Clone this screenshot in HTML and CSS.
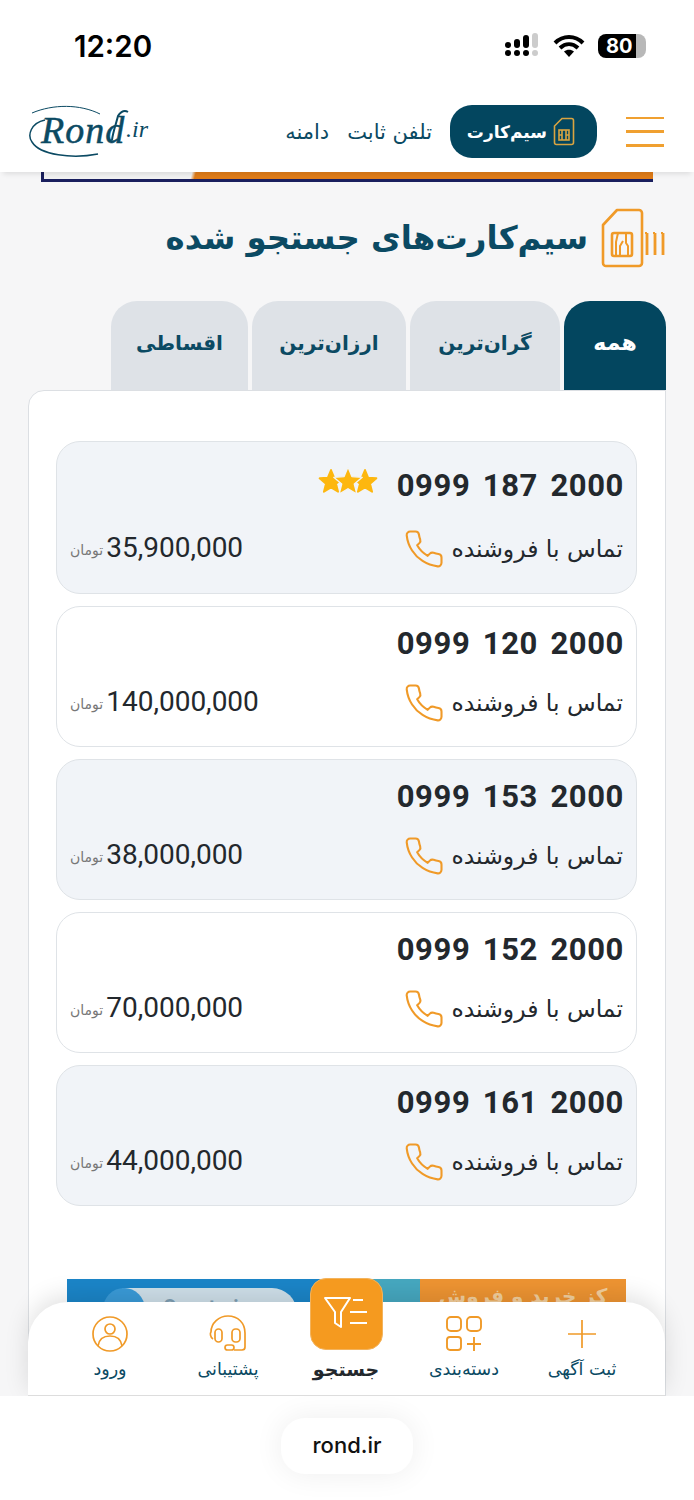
FILE: index.html
```html
<!DOCTYPE html>
<html lang="fa" dir="rtl">
<head>
    <meta charset="UTF-8">
    <meta name="viewport" content="width=device-width, initial-scale=1.0">
    <title>rond.ir</title>
    <link rel="stylesheet" href="styles.css">
</head>
<body>
    <svg class="defs" width="0" height="0">
        <symbol id="phone" viewBox="0 0 24 24">
            <path d="M22 16.92v3a2 2 0 0 1-2.18 2 19.79 19.79 0 0 1-8.63-3.07 19.5 19.5 0 0 1-6-6 19.79 19.79 0 0 1-3.07-8.67A2 2 0 0 1 4.11 2h3a2 2 0 0 1 2 1.72 12.84 12.84 0 0 0 .7 2.81 2 2 0 0 1-.45 2.11L8.09 9.91a16 16 0 0 0 6 6l1.27-1.27a2 2 0 0 1 2.11-.45 12.84 12.84 0 0 0 2.81.7A2 2 0 0 1 22 16.92z" fill="none" stroke="#f09a28" stroke-width="1.2" stroke-linejoin="round"/>
        </symbol>
    </svg>

    <div class="status-bar" dir="ltr">
        <span class="clock">12:20</span>
        <div class="status-icons">
            <svg width="36" height="26" viewBox="0 0 36 26" fill="#000">
                <circle cx="4" cy="20" r="3"/><circle cx="13" cy="20" r="3"/><circle cx="22" cy="20" r="3"/><circle cx="31" cy="20" r="3" fill="#ccc"/>
                <circle cx="4" cy="12" r="3"/><rect x="10" y="6" width="6" height="9" rx="3"/><rect x="19" y="2" width="6" height="13" rx="3"/><rect x="28" y="0" width="6" height="15" rx="3" fill="#ccc"/>
            </svg>
            <svg width="32" height="24" viewBox="0 0 32 24">
                <path d="M2 9C10 1 22 1 30 9M7 14c5.500-5 12.500-5 18 0" fill="none" stroke="#000" stroke-width="4"/>
                <path d="M11 17.500c3-2.500 7-2.500 10 0L16 23z" fill="#000"/>
            </svg>
            <div class="battery"><span>80</span></div>
        </div>
    </div>

    <header class="site-header">
        <button class="menu-btn" aria-label="menu"><i></i><i></i><i></i></button>
        <nav class="top-nav">
            <a class="sim-btn" href="#">
                <svg width="22" height="29" viewBox="0 0 22 29" fill="none" stroke="#d9a441" stroke-width="1.600">
                    <path d="M9 1.500h9.500a2 2 0 0 1 2 2v22a2 2 0 0 1-2 2h-15a2 2 0 0 1-2-2V9z"/>
                    <rect x="6" y="13" width="10" height="10"/>
                    <path d="M9 13v10M13 13v10M6 18h3M13 18h3"/>
                </svg>
                سیم‌کارت
            </a>
            <a href="#">تلفن ثابت</a>
            <a href="#">دامنه</a>
        </nav>
        <svg class="logo" width="124" height="56" viewBox="0 0 124 56">
            <path d="M4 9C25 0 52 0 72 10" fill="none" stroke="#0b4a63" stroke-width="1"/>
            <path d="M17 16C3 19-1 31 4 38c8 13 40 17 66 12" fill="none" stroke="#0b4a63" stroke-width="1.500"/>
            <path d="M100 8c-5-3-9 2-10 4-2 8-5 16-6 24" fill="none" stroke="#0b4a63" stroke-width="2"/>
            <text class="logo-rond" x="13" y="39">Rond</text>
            <text class="logo-ir" x="98" y="33">.ir</text>
        </svg>
    </header>

    <div class="viewport">
        <div class="banner"><div class="banner-fill"></div></div>

        <div class="title-row">
            <svg width="65" height="60" viewBox="0 0 65 60" fill="none" stroke="#f09a28" stroke-width="2.600" stroke-linejoin="round">
                <path d="M16 2h22a3 3 0 0 1 3 3v50a3 3 0 0 1-3 3H5a3 3 0 0 1-3-3V17z"/>
                <rect x="11" y="25" width="20" height="23" rx="2"/>
                <path d="M17 25l-2 9v14M25 25v10l2 3v10M19 48V38l3-5" stroke-width="2"/>
                <path d="M46 25v22M54 25v22M62 25v22" stroke-width="2.800"/>
                <path d="M46 25h-2M54 25h-2M62 25h-2" stroke-width="2"/>
            </svg>
            <h1>سیم‌کارت‌های جستجو شده</h1>
        </div>

        <div class="tabs">
            <a class="tab tab-all active" href="#">همه</a>
            <a class="tab tab-high" href="#">گران‌ترین</a>
            <a class="tab tab-low" href="#">ارزان‌ترین</a>
            <a class="tab tab-inst" href="#">اقساطی</a>
        </div>

        <main class="panel">
            <article class="card shaded first">
                <div class="card-top">
                    <div class="number" dir="ltr"><span>0999</span><span>187</span><span>2000</span></div>
                    <div class="stars">
                        <svg width="60" height="30" viewBox="0 0 60 30" fill="#fdb70f" stroke="#fdb70f" stroke-linejoin="round">
                            <polygon transform="translate(13 16) scale(12)" stroke-width=".16" points="0,-1 .26,-.36 .95,-.31 .42,.14 .59,.81 0,.45 -.59,.81 -.42,.14 -.95,-.31 -.26,-.36"/>
                            <polygon transform="translate(47 16) scale(12)" stroke-width=".16" points="0,-1 .26,-.36 .95,-.31 .42,.14 .59,.81 0,.45 -.59,.81 -.42,.14 -.95,-.31 -.26,-.36"/>
                            <polygon transform="translate(30 16) scale(15)" stroke="#f1f4f8" stroke-width=".09" points="0,-1 .26,-.36 .95,-.31 .42,.14 .59,.81 0,.45 -.59,.81 -.42,.14 -.95,-.31 -.26,-.36"/>
                        </svg>
                    </div>
                </div>
                <div class="card-bottom">
                    <a class="call" href="#">تماس با فروشنده <svg width="42" height="42"><use href="#phone"/></svg></a>
                    <div class="price"><b>35,900,000</b><small>تومان</small></div>
                </div>
            </article>

            <article class="card">
                <div class="card-top">
                    <div class="number" dir="ltr"><span>0999</span><span>120</span><span>2000</span></div>
                </div>
                <div class="card-bottom">
                    <a class="call" href="#">تماس با فروشنده <svg width="42" height="42"><use href="#phone"/></svg></a>
                    <div class="price"><b>140,000,000</b><small>تومان</small></div>
                </div>
            </article>

            <article class="card shaded">
                <div class="card-top">
                    <div class="number" dir="ltr"><span>0999</span><span>153</span><span>2000</span></div>
                </div>
                <div class="card-bottom">
                    <a class="call" href="#">تماس با فروشنده <svg width="42" height="42"><use href="#phone"/></svg></a>
                    <div class="price"><b>38,000,000</b><small>تومان</small></div>
                </div>
            </article>

            <article class="card">
                <div class="card-top">
                    <div class="number" dir="ltr"><span>0999</span><span>152</span><span>2000</span></div>
                </div>
                <div class="card-bottom">
                    <a class="call" href="#">تماس با فروشنده <svg width="42" height="42"><use href="#phone"/></svg></a>
                    <div class="price"><b>70,000,000</b><small>تومان</small></div>
                </div>
            </article>

            <article class="card shaded">
                <div class="card-top">
                    <div class="number" dir="ltr"><span>0999</span><span>161</span><span>2000</span></div>
                </div>
                <div class="card-bottom">
                    <a class="call" href="#">تماس با فروشنده <svg width="42" height="42"><use href="#phone"/></svg></a>
                    <div class="price"><b>44,000,000</b><small>تومان</small></div>
                </div>
            </article>

            <div class="ads">
                <div class="ad ad-orange"><span>کز خرید و فروش</span></div>
                <div class="ad ad-teal"></div>
                <div class="ad ad-blue">
                    <div class="tg-pill" dir="ltr"><i class="tg-circle"></i><span>Constrain</span></div>
                </div>
            </div>
        </main>

        <nav class="bottom-nav">
            <a class="nav-item" href="#">
                <svg width="38" height="38" viewBox="0 0 38 38" fill="none" stroke="#f09a28" stroke-width="1.700">
                    <path d="M19 5v28M5 19h28"/>
                </svg>
                ثبت آگهی
            </a>
            <a class="nav-item" href="#">
                <svg width="38" height="38" viewBox="0 0 38 38" fill="none" stroke="#f09a28" stroke-width="1.900">
                    <rect x="2" y="2" width="14" height="14" rx="4"/><rect x="22" y="2" width="14" height="14" rx="4"/>
                    <rect x="2" y="22" width="14" height="13" rx="3"/><path d="M29 22v14M22 29h14"/>
                </svg>
                دسته‌بندی
            </a>
            <a class="nav-item search" href="#">
                <span class="search-box">
                    <svg width="46" height="40" viewBox="0 0 46 40" fill="none" stroke="#fff" stroke-width="2" stroke-linejoin="round">
                        <path d="M2 4h25l-9 14v15l-6-4V18z"/>
                        <path d="M30 6h10M27 18h17M27 29h17"/>
                    </svg>
                </span>
                جستجو
            </a>
            <a class="nav-item" href="#">
                <svg width="38" height="38" viewBox="0 0 38 38" fill="none" stroke="#f09a28" stroke-width="1.700">
                    <path d="M4 24C1 22 1 18 2 17 2 8 10 1 19 1c10 0 17 7 17 17v14q0 3-3 3h-8"/>
                    <rect x="6" y="14" width="7" height="13" rx="3.500"/><rect x="23" y="14" width="8" height="13" rx="3.500"/>
                    <rect x="16" y="30" width="9" height="5" rx="2.500"/>
                </svg>
                پشتیبانی
            </a>
            <a class="nav-item" href="#">
                <svg width="38" height="38" viewBox="0 0 38 38" fill="none" stroke="#f09a28" stroke-width="1.700">
                    <circle cx="19" cy="19" r="17"/><circle cx="19" cy="14" r="5"/>
                    <path d="M7 31c1-7 6-10 12-10s11 3 12 10"/>
                </svg>
                ورود
            </a>
        </nav>
    </div>

    <footer class="url-bar"><span>rond.ir</span></footer>
</body>
</html>
```

FILE: styles.css
```css
* {
    box-sizing: border-box;
}

body {
    font-family: "DejaVu Sans", sans-serif;
    margin: 0;
    width: 694px;
    height: 1500px;
    overflow: hidden;
    display: flex;
    flex-direction: column;
    background-color: #fff;
    color: #23282d;
}

a {
    color: inherit;
    text-decoration: none;
}

.defs {
    position: absolute;
}

.status-bar {
    height: 95px;
    flex: none;
    display: flex;
    justify-content: space-between;
    align-items: flex-start;
    padding: 28px 48px 0 74px;
}

.clock {
    font-family: Inter, sans-serif;
    font-size: 29.5px;
    font-weight: 600;
    line-height: 36px;
    color: #000;
}

.status-icons {
    display: flex;
    align-items: center;
    gap: 13px;
    height: 36px;
}

.battery {
    width: 48px;
    height: 24px;
    border-radius: 8px;
    background: linear-gradient(to right, #000 38px, #b8b8b8 38px);
    color: #fff;
    font-family: Inter, sans-serif;
    font-size: 20px;
    font-weight: 700;
    line-height: 24px;
    padding-left: 8px;
}

.site-header {
    height: 77px;
    flex: none;
    display: flex;
    align-items: center;
    padding: 0 30px 4px 28px;
    background-color: #fff;
    box-shadow: 0 5px 5px -3px rgba(0, 0, 0, 0.1);
    position: relative;
    z-index: 2;
}

.menu-btn {
    width: 38px;
    height: 30px;
    padding: 0;
    border: none;
    background: none;
    display: flex;
    flex-direction: column;
    justify-content: space-between;
}

.menu-btn i {
    display: block;
    width: 100%;
    height: 2.500px;
    background-color: #f0a030;
}

.top-nav {
    display: flex;
    align-items: center;
    gap: 18px;
    margin-right: 29px;
    color: #0b4a63;
    font-size: 21px;
}

.sim-btn {
    display: flex;
    align-items: center;
    gap: 6px;
    width: 147px;
    height: 53px;
    padding-right: 22px;
    border-radius: 22px;
    background-color: #03465f;
    color: #fff;
    font-size: 17px;
    font-weight: 700;
}

.logo {
    margin-right: auto;
    direction: ltr;
}

.logo-rond {
    font-family: "Liberation Serif", serif;
    font-style: italic;
    font-size: 38px;
    letter-spacing: 1px;
    fill: #0b4a63;
    stroke: #0b4a63;
    stroke-width: 0.5px;
}

.logo-ir {
    font-family: "Liberation Serif", serif;
    font-style: italic;
    font-size: 24px;
    fill: #0b4a63;
}

.viewport {
    flex: none;
    height: 1224px;
    position: relative;
    overflow: hidden;
    background-color: #f6f6f7;
}

.banner {
    height: 10px;
    margin: 0 41px;
    background-color: #1a1f5e;
    padding: 0 0 3px 3px;
}

.banner-fill {
    height: 7px;
    background: linear-gradient(105deg, #f2f2f2 0, #f2f2f2 143px, #e07c18 147px);
}

.title-row {
    display: flex;
    align-items: center;
    gap: 13px;
    height: 60px;
    margin-top: 26px;
    padding-right: 28px;
}

h1 {
    margin: 0;
    font-size: 32.4px;
    font-weight: 700;
    color: #0b4a63;
}

.tabs {
    display: flex;
    gap: 4px;
    height: 89px;
    margin-top: 33px;
    padding-right: 28px;
}

.tab {
    height: 89px;
    border-radius: 26px 26px 0 0;
    background-color: #dee2e7;
    color: #0b4a63;
    font-size: 20px;
    font-weight: 700;
    text-align: center;
    line-height: 84px;
}

.tab.active {
    background-color: #03465f;
    color: #fff;
    font-size: 22px;
}

.tab-all { width: 102px; }
.tab-high { width: 150px; }
.tab-low { width: 154px; }
.tab-inst { width: 137px; }

.panel {
    margin: 0 28px;
    height: 1100px;
    padding: 50px 28px 0 27px;
    background-color: #fff;
    border: 1px solid #dcdfe3;
    border-radius: 16px 0 0 0;
    display: flex;
    flex-direction: column;
    gap: 12px;
}

.card {
    height: 141px;
    padding: 14px 13px 0 13px;
    background-color: #fff;
    border: 1px solid #dfe3e7;
    border-radius: 24px;
}

.card.first {
    height: 153px;
    padding-top: 21px;
}

.card.shaded {
    background-color: #f1f4f8;
}

.card-top {
    display: flex;
    align-items: center;
    gap: 19px;
    height: 44px;
}

.number {
    display: flex;
    gap: 12.500px;
    margin-right: -1px;
    font-family: Roboto, sans-serif;
    font-size: 31px;
    font-weight: 700;
    letter-spacing: 0.6px;
    color: #23282d;
}

.stars {
    display: flex;
    margin-top: -8px;
}

.card-bottom {
    display: flex;
    justify-content: space-between;
    align-items: center;
    height: 40px;
    margin-top: 18px;
}

.card.first .card-bottom {
    margin-top: 22px;
}

.call {
    display: flex;
    align-items: center;
    gap: 6px;
    font-size: 23.500px;
    color: #23282d;
}

.call svg {
    margin: -1px 0;
}

.price {
    display: flex;
    align-items: center;
    gap: 3px;
    margin-top: -4px;
}

.price b {
    font-family: Roboto, sans-serif;
    font-size: 28px;
    font-weight: 400;
    color: #23282d;
}

.price small {
    font-size: 14px;
    color: #777;
    margin-top: 5px;
}

.ads {
    display: flex;
    margin: 61px 11px 0;
    height: 100px;
    overflow: hidden;
}

.ad {
    height: 100%;
    overflow: hidden;
}

.ad-orange {
    width: 206px;
    background-color: #ee9432;
    color: #f3cf9d;
    font-size: 20px;
    font-weight: 700;
    text-align: center;
    line-height: 34px;
    white-space: nowrap;
}

.ad-teal {
    width: 90px;
    background-color: #46a8c0;
}

.ad-blue {
    flex: 1;
    background-color: #1b85c8;
    padding-top: 9px;
}

.tg-pill {
    display: flex;
    height: 50px;
    width: 194px;
    margin-right: 33px;
    border-radius: 25px;
    background-color: #cfe0ea;
    color: #7f9fb4;
    font-family: Roboto, sans-serif;
    font-size: 20px;
    font-weight: 700;
    line-height: 38px;
    gap: 18px;
}

.tg-circle {
    width: 42px;
    height: 42px;
    border-radius: 50%;
    background-color: #3a9bd8;
}

.bottom-nav {
    position: absolute;
    left: 28px;
    right: 29px;
    bottom: 0;
    height: 94px;
    padding: 0 24px 0 23px;
    display: grid;
    grid-template-columns: repeat(5, 118px);
    background-color: #fff;
    border-radius: 40px 40px 0 0;
    border-bottom: 1px solid #ddd;
    box-shadow: 0 -6px 24px rgba(0, 0, 0, 0.12);
    color: #0b4a63;
    font-size: 17.500px;
}

.nav-item {
    display: flex;
    flex-direction: column;
    align-items: center;
    gap: 6px;
    padding-top: 13px;
    white-space: nowrap;
}

.nav-item.search {
    color: #23282d;
    font-size: 19px;
    font-weight: 700;
    gap: 8px;
    padding-top: 0;
    margin-top: -24px;
}

.search-box {
    width: 73px;
    height: 72px;
    display: flex;
    align-items: center;
    justify-content: center;
    border-radius: 16px;
    background-color: #f59a1f;
    border: 1px solid #f3b35c;
}

.url-bar {
    flex: 1;
    display: flex;
    justify-content: center;
    padding-top: 22px;
    background-color: #fff;
}

.url-bar span {
    width: 132px;
    height: 56px;
    border-radius: 24px;
    background-color: #fff;
    box-shadow: 0 0 30px rgba(0, 0, 0, 0.07);
    font-family: Inter, sans-serif;
    font-size: 22px;
    font-weight: 500;
    line-height: 54px;
    text-align: center;
    color: #111;
}
```
